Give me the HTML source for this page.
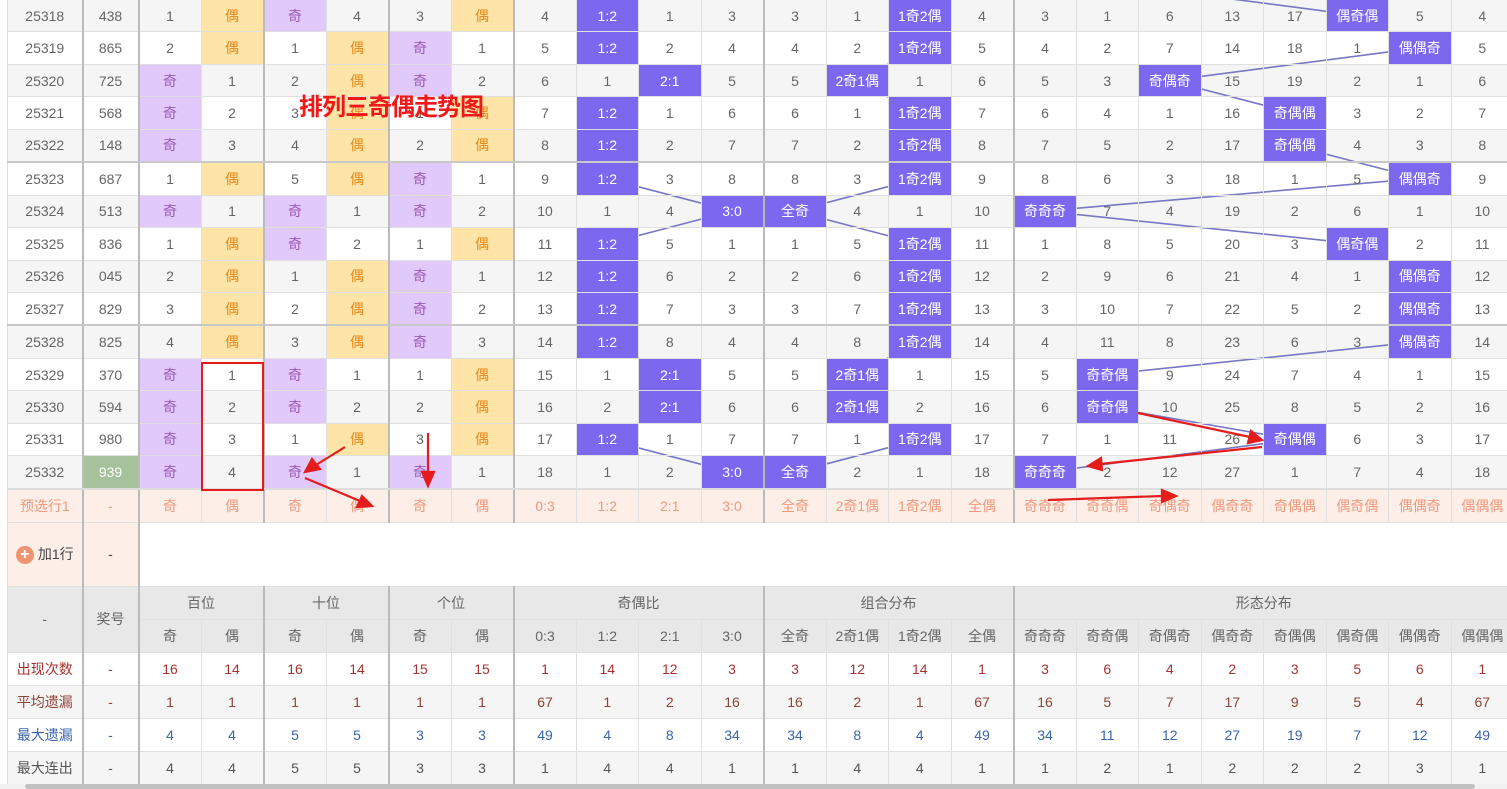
<!DOCTYPE html>
<html><head><meta charset="utf-8">
<style>
html,body{margin:0;padding:0;width:1507px;height:789px;overflow:hidden;background:#fff;}
body{font-family:"Liberation Sans","Noto Sans CJK SC",sans-serif;font-size:14px;color:#666;position:relative;}
#stripe{position:absolute;left:7px;top:-1px;width:1506px;height:489.6px;background:repeating-linear-gradient(to bottom,#f5f5f5 0,#f5f5f5 32.64px,#fff 32.64px,#fff 65.28px);z-index:0;}
#lines{position:absolute;left:0;top:0;z-index:1;}
#ann{position:absolute;left:0;top:0;z-index:3;}
table{position:absolute;left:7px;top:-1px;border-collapse:collapse;table-layout:fixed;width:1506px;z-index:2;}
col.g{border-left:2px solid #bbb;}
td{border:1px solid #e0e0e0;text-align:center;padding:0;white-space:nowrap;overflow:hidden;}
tr.d td{height:31.45px;}
tr.sep td{border-bottom:2px solid #c8c8c8;}
td.p{background:#e2c9fb;color:#9b59b6;}
td.o{background:#fee4a6;color:#e8891a;}
td.b{background:#7b68ee;color:#fff;}
td.gr{background:#a5c29c;color:#fff;}
tr.pre td{background:#fdeee7;color:#ef9a7c;height:32px;border-top:2px solid #ddd;}
tr.add td{height:63px;}
tr.add td.l{background:#fdeee7;color:#444;}
tr.hd td{background:#e8e8e8;color:#666;height:32px;}
tr.s td{height:32.2px;}
tr.s1 td{color:#a83232;background:#fff;}
tr.s2 td{color:#8e4436;background:#f5f5f5;}
tr.s3 td{color:#3a64ad;background:#fff;}
tr.s4 td{color:#555;background:#f5f5f5;}
.plus{display:inline-block;width:18px;height:18px;border-radius:50%;background:#ef9472;color:#fff;font-size:16px;line-height:18px;font-weight:bold;vertical-align:middle;margin-right:4px;}
#title{position:absolute;left:299px;top:87px;font-size:24px;font-weight:bold;color:#f01818;z-index:3;font-family:"Noto Sans CJK SC",sans-serif;letter-spacing:-1px;}
#rect{position:absolute;left:201px;top:362px;width:59px;height:125px;border:2px solid #e41c1c;z-index:3;}
#sb{position:absolute;left:0;top:784px;width:1507px;height:5px;background:#f1f1f1;z-index:4;}
#sb div{position:absolute;left:25px;top:0;width:1450px;height:5px;background:#c1c1c1;border-radius:3px;}
</style></head><body>
<div id="stripe"></div>
<svg id="lines" width="1507" height="789">
<g fill="none" stroke="#7777c4" stroke-width="1.6">
<polyline points="606.75,15.3 606.75,47.9 669.25,80.6 606.75,113.2 606.75,145.9 606.75,178.5 731.75,211.1 606.75,243.8 606.75,276.4 606.75,309.1 606.75,341.7 669.25,374.3 669.25,407 606.75,439.6 731.75,472.3"/>
<polyline points="919.25,15.3 919.25,47.9 856.75,80.6 919.25,113.2 919.25,145.9 919.25,178.5 794.25,211.1 919.25,243.8 919.25,276.4 919.25,309.1 919.25,341.7 856.75,374.3 856.75,407 919.25,439.6 794.25,472.3"/>
<polyline points="1106.75,-17.3 1356.75,15.3 1419.25,47.9 1169.25,80.6 1294.25,113.2 1294.25,145.9 1419.25,178.5 1044.25,211.1 1356.75,243.8 1419.25,276.4 1419.25,309.1 1419.25,341.7 1106.75,374.3 1106.75,407 1294.25,439.6 1044.25,472.3"/>
</g></svg>
<table>
<colgroup><col style="width:75px"><col class="g" style="width:56px"><col class="g" style="width:62.5px"><col style="width:62.5px"><col class="g" style="width:62.5px"><col style="width:62.5px"><col class="g" style="width:62.5px"><col style="width:62.5px"><col class="g" style="width:62.5px"><col style="width:62.5px"><col style="width:62.5px"><col style="width:62.5px"><col class="g" style="width:62.5px"><col style="width:62.5px"><col style="width:62.5px"><col style="width:62.5px"><col class="g" style="width:62.5px"><col style="width:62.5px"><col style="width:62.5px"><col style="width:62.5px"><col style="width:62.5px"><col style="width:62.5px"><col style="width:62.5px"><col style="width:62.5px"></colgroup>
<tr class="d"><td>25318</td><td>438</td><td>1</td><td class="o">偶</td><td class="p">奇</td><td>4</td><td>3</td><td class="o">偶</td><td>4</td><td class="b">1:2</td><td>1</td><td>3</td><td>3</td><td>1</td><td class="b">1奇2偶</td><td>4</td><td>3</td><td>1</td><td>6</td><td>13</td><td>17</td><td class="b">偶奇偶</td><td>5</td><td>4</td></tr>
<tr class="d"><td>25319</td><td>865</td><td>2</td><td class="o">偶</td><td>1</td><td class="o">偶</td><td class="p">奇</td><td>1</td><td>5</td><td class="b">1:2</td><td>2</td><td>4</td><td>4</td><td>2</td><td class="b">1奇2偶</td><td>5</td><td>4</td><td>2</td><td>7</td><td>14</td><td>18</td><td>1</td><td class="b">偶偶奇</td><td>5</td></tr>
<tr class="d"><td>25320</td><td>725</td><td class="p">奇</td><td>1</td><td>2</td><td class="o">偶</td><td class="p">奇</td><td>2</td><td>6</td><td>1</td><td class="b">2:1</td><td>5</td><td>5</td><td class="b">2奇1偶</td><td>1</td><td>6</td><td>5</td><td>3</td><td class="b">奇偶奇</td><td>15</td><td>19</td><td>2</td><td>1</td><td>6</td></tr>
<tr class="d"><td>25321</td><td>568</td><td class="p">奇</td><td>2</td><td>3</td><td class="o">偶</td><td>1</td><td class="o">偶</td><td>7</td><td class="b">1:2</td><td>1</td><td>6</td><td>6</td><td>1</td><td class="b">1奇2偶</td><td>7</td><td>6</td><td>4</td><td>1</td><td>16</td><td class="b">奇偶偶</td><td>3</td><td>2</td><td>7</td></tr>
<tr class="d sep"><td>25322</td><td>148</td><td class="p">奇</td><td>3</td><td>4</td><td class="o">偶</td><td>2</td><td class="o">偶</td><td>8</td><td class="b">1:2</td><td>2</td><td>7</td><td>7</td><td>2</td><td class="b">1奇2偶</td><td>8</td><td>7</td><td>5</td><td>2</td><td>17</td><td class="b">奇偶偶</td><td>4</td><td>3</td><td>8</td></tr>
<tr class="d"><td>25323</td><td>687</td><td>1</td><td class="o">偶</td><td>5</td><td class="o">偶</td><td class="p">奇</td><td>1</td><td>9</td><td class="b">1:2</td><td>3</td><td>8</td><td>8</td><td>3</td><td class="b">1奇2偶</td><td>9</td><td>8</td><td>6</td><td>3</td><td>18</td><td>1</td><td>5</td><td class="b">偶偶奇</td><td>9</td></tr>
<tr class="d"><td>25324</td><td>513</td><td class="p">奇</td><td>1</td><td class="p">奇</td><td>1</td><td class="p">奇</td><td>2</td><td>10</td><td>1</td><td>4</td><td class="b">3:0</td><td class="b">全奇</td><td>4</td><td>1</td><td>10</td><td class="b">奇奇奇</td><td>7</td><td>4</td><td>19</td><td>2</td><td>6</td><td>1</td><td>10</td></tr>
<tr class="d"><td>25325</td><td>836</td><td>1</td><td class="o">偶</td><td class="p">奇</td><td>2</td><td>1</td><td class="o">偶</td><td>11</td><td class="b">1:2</td><td>5</td><td>1</td><td>1</td><td>5</td><td class="b">1奇2偶</td><td>11</td><td>1</td><td>8</td><td>5</td><td>20</td><td>3</td><td class="b">偶奇偶</td><td>2</td><td>11</td></tr>
<tr class="d"><td>25326</td><td>045</td><td>2</td><td class="o">偶</td><td>1</td><td class="o">偶</td><td class="p">奇</td><td>1</td><td>12</td><td class="b">1:2</td><td>6</td><td>2</td><td>2</td><td>6</td><td class="b">1奇2偶</td><td>12</td><td>2</td><td>9</td><td>6</td><td>21</td><td>4</td><td>1</td><td class="b">偶偶奇</td><td>12</td></tr>
<tr class="d sep"><td>25327</td><td>829</td><td>3</td><td class="o">偶</td><td>2</td><td class="o">偶</td><td class="p">奇</td><td>2</td><td>13</td><td class="b">1:2</td><td>7</td><td>3</td><td>3</td><td>7</td><td class="b">1奇2偶</td><td>13</td><td>3</td><td>10</td><td>7</td><td>22</td><td>5</td><td>2</td><td class="b">偶偶奇</td><td>13</td></tr>
<tr class="d"><td>25328</td><td>825</td><td>4</td><td class="o">偶</td><td>3</td><td class="o">偶</td><td class="p">奇</td><td>3</td><td>14</td><td class="b">1:2</td><td>8</td><td>4</td><td>4</td><td>8</td><td class="b">1奇2偶</td><td>14</td><td>4</td><td>11</td><td>8</td><td>23</td><td>6</td><td>3</td><td class="b">偶偶奇</td><td>14</td></tr>
<tr class="d"><td>25329</td><td>370</td><td class="p">奇</td><td>1</td><td class="p">奇</td><td>1</td><td>1</td><td class="o">偶</td><td>15</td><td>1</td><td class="b">2:1</td><td>5</td><td>5</td><td class="b">2奇1偶</td><td>1</td><td>15</td><td>5</td><td class="b">奇奇偶</td><td>9</td><td>24</td><td>7</td><td>4</td><td>1</td><td>15</td></tr>
<tr class="d"><td>25330</td><td>594</td><td class="p">奇</td><td>2</td><td class="p">奇</td><td>2</td><td>2</td><td class="o">偶</td><td>16</td><td>2</td><td class="b">2:1</td><td>6</td><td>6</td><td class="b">2奇1偶</td><td>2</td><td>16</td><td>6</td><td class="b">奇奇偶</td><td>10</td><td>25</td><td>8</td><td>5</td><td>2</td><td>16</td></tr>
<tr class="d"><td>25331</td><td>980</td><td class="p">奇</td><td>3</td><td>1</td><td class="o">偶</td><td>3</td><td class="o">偶</td><td>17</td><td class="b">1:2</td><td>1</td><td>7</td><td>7</td><td>1</td><td class="b">1奇2偶</td><td>17</td><td>7</td><td>1</td><td>11</td><td>26</td><td class="b">奇偶偶</td><td>6</td><td>3</td><td>17</td></tr>
<tr class="d"><td>25332</td><td class="gr">939</td><td class="p">奇</td><td>4</td><td class="p">奇</td><td>1</td><td class="p">奇</td><td>1</td><td>18</td><td>1</td><td>2</td><td class="b">3:0</td><td class="b">全奇</td><td>2</td><td>1</td><td>18</td><td class="b">奇奇奇</td><td>2</td><td>12</td><td>27</td><td>1</td><td>7</td><td>4</td><td>18</td></tr>
<tr class="pre"><td>预选行1</td><td>-</td><td>奇</td><td>偶</td><td>奇</td><td>偶</td><td>奇</td><td>偶</td><td>0:3</td><td>1:2</td><td>2:1</td><td>3:0</td><td>全奇</td><td>2奇1偶</td><td>1奇2偶</td><td>全偶</td><td>奇奇奇</td><td>奇奇偶</td><td>奇偶奇</td><td>偶奇奇</td><td>奇偶偶</td><td>偶奇偶</td><td>偶偶奇</td><td>偶偶偶</td></tr>
<tr class="add"><td class="l"><span class="plus">+</span>加1行</td><td class="l">-</td><td colspan="22" style="background:#fff"></td></tr>
<tr class="hd"><td rowspan="2">-</td><td rowspan="2">奖号</td><td colspan="2">百位</td><td colspan="2">十位</td><td colspan="2">个位</td><td colspan="4">奇偶比</td><td colspan="4">组合分布</td><td colspan="8">形态分布</td></tr>
<tr class="hd"><td>奇</td><td>偶</td><td>奇</td><td>偶</td><td>奇</td><td>偶</td><td>0:3</td><td>1:2</td><td>2:1</td><td>3:0</td><td>全奇</td><td>2奇1偶</td><td>1奇2偶</td><td>全偶</td><td>奇奇奇</td><td>奇奇偶</td><td>奇偶奇</td><td>偶奇奇</td><td>奇偶偶</td><td>偶奇偶</td><td>偶偶奇</td><td>偶偶偶</td></tr>
<tr class="s s1"><td>出现次数</td><td>-</td><td>16</td><td>14</td><td>16</td><td>14</td><td>15</td><td>15</td><td>1</td><td>14</td><td>12</td><td>3</td><td>3</td><td>12</td><td>14</td><td>1</td><td>3</td><td>6</td><td>4</td><td>2</td><td>3</td><td>5</td><td>6</td><td>1</td></tr>
<tr class="s s2"><td>平均遗漏</td><td>-</td><td>1</td><td>1</td><td>1</td><td>1</td><td>1</td><td>1</td><td>67</td><td>1</td><td>2</td><td>16</td><td>16</td><td>2</td><td>1</td><td>67</td><td>16</td><td>5</td><td>7</td><td>17</td><td>9</td><td>5</td><td>4</td><td>67</td></tr>
<tr class="s s3"><td>最大遗漏</td><td>-</td><td>4</td><td>4</td><td>5</td><td>5</td><td>3</td><td>3</td><td>49</td><td>4</td><td>8</td><td>34</td><td>34</td><td>8</td><td>4</td><td>49</td><td>34</td><td>11</td><td>12</td><td>27</td><td>19</td><td>7</td><td>12</td><td>49</td></tr>
<tr class="s s4"><td>最大连出</td><td>-</td><td>4</td><td>4</td><td>5</td><td>5</td><td>3</td><td>3</td><td>1</td><td>4</td><td>4</td><td>1</td><td>1</td><td>4</td><td>4</td><td>1</td><td>1</td><td>2</td><td>1</td><td>2</td><td>2</td><td>2</td><td>3</td><td>1</td></tr>
</table>
<div id="title">排列三奇偶走势图</div>
<div id="rect"></div>
<svg id="ann" width="1507" height="789">
<g stroke="#e41c1c" stroke-width="2.2" fill="#e41c1c">
<line x1="345" y1="447" x2="316" y2="465"/><polygon points="305,472 312,459 320,469"/>
<line x1="305" y1="478" x2="360" y2="501"/><polygon points="372,506 357,507 362,496"/>
<line x1="428" y1="433" x2="428" y2="474"/><polygon points="428,486 422,472 434,472"/>
<line x1="1138" y1="413" x2="1250" y2="437"/><polygon points="1262,440 1248,443 1251,431"/>
<line x1="1262" y1="447" x2="1100" y2="464"/><polygon points="1088,466 1101,458 1102,470"/>
<line x1="1048" y1="500" x2="1163" y2="496"/><polygon points="1176,496 1162,502 1162,490"/>
</g></svg>
<div id="sb"><div></div></div>
</body></html>
